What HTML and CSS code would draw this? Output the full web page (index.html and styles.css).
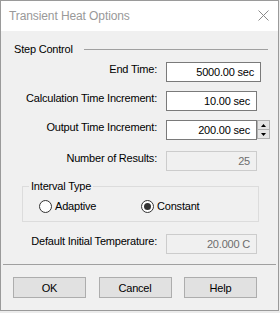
FILE: index.html
```html
<!DOCTYPE html>
<html>
<head>
<meta charset="utf-8">
<link rel="stylesheet" href="styles.css">
</head>
<body>
<div class="window">
  <div class="titlebar">
    <span class="title">Transient Heat Options</span>
    <svg class="close" width="11" height="11" viewBox="0 0 11 11"><path d="M0.5 0.5L10.5 10.5M10.5 0.5L0.5 10.5" stroke="#8a8a8a" stroke-width="1" fill="none"/></svg>
  </div>
  <div class="content">
    <div class="section-head"><span>Step Control</span><span class="rule"></span></div>
    <div class="row first">
      <span class="lbl">End Time:</span>
      <div class="field wide">5000.00 sec</div>
    </div>
    <div class="row">
      <span class="lbl">Calculation Time Increment:</span>
      <div class="field">10.00 sec</div>
    </div>
    <div class="row">
      <span class="lbl">Output Time Increment:</span>
      <div class="field">200.00 sec</div>
      <div class="spin">
        <span class="spin-btn"><svg width="5" height="3" viewBox="0 0 5 3"><path d="M2.5 0L5 3H0z" fill="#000"/></svg></span>
        <span class="spin-btn"><svg width="5" height="3" viewBox="0 0 5 3"><path d="M0 0H5L2.5 3z" fill="#000"/></svg></span>
      </div>
    </div>
    <div class="row results">
      <span class="lbl">Number of Results:</span>
      <div class="field disabled">25</div>
    </div>
    <fieldset class="group">
      <legend>Interval Type</legend>
      <div class="radios">
        <span class="radio adaptive"><span class="circle"></span>Adaptive</span>
        <span class="radio"><span class="circle checked"></span>Constant</span>
      </div>
    </fieldset>
    <div class="row temp">
      <span class="lbl">Default Initial Temperature:</span>
      <div class="field disabled">20.000 C</div>
    </div>
    <div class="sep"></div>
    <div class="buttons">
      <span class="btn">OK</span>
      <span class="btn">Cancel</span>
      <span class="btn">Help</span>
    </div>
  </div>
</div>
</body>
</html>
```

FILE: styles.css
```css
html, body {
  margin: 0;
  padding: 0;
  background: #ececec;
}
body {
  font-family: "Liberation Sans", Arial, sans-serif;
  font-size: 11px;
  letter-spacing: -0.2px;
  color: #000;
}
.window {
  width: 277px;
  height: 309px;
  border: 1px solid #9a9a9a;
  background: #f0f0f0;
  display: flex;
  flex-direction: column;
}
.titlebar {
  height: 30px;
  background: #fff;
  display: flex;
  align-items: center;
  padding-left: 8px;
  padding-right: 9px;
  flex: none;
}
.title {
  flex: 1;
  color: #999;
  font-size: 12px;
  letter-spacing: -0.1px;
  line-height: 16px;
  margin-top: -1px;
}
.close {
  display: block;
  margin-top: -1px;
}
.content {
  padding-top: 10px;
  display: flex;
  flex-direction: column;
}
.section-head {
  display: flex;
  align-items: center;
  height: 16px;
  line-height: 16px;
  padding-left: 13px;
  padding-right: 10px;
}
.rule {
  flex: 1;
  height: 1px;
  background: #a0a0a0;
  margin-left: 11px;
}
.row {
  display: flex;
  align-items: flex-start;
  height: 20px;
  margin-top: 9px;
}
.row.first { margin-top: 5px; }
.row.results { margin-top: 11px; }
.row.temp { margin-top: 12px; }
.lbl {
  width: 156px;
  flex: none;
  text-align: right;
  line-height: 16px;
  margin-top: -1px;
  white-space: nowrap;
}
.field {
  box-sizing: border-box;
  width: 91px;
  height: 20px;
  margin-left: 9px;
  border: 1px solid #7a7a7a;
  background: #fff;
  text-align: right;
  padding-right: 6px;
  line-height: 18px;
  white-space: nowrap;
}
.field.wide { width: 95px; }
.field.disabled {
  border-color: #cccccc;
  background: #f0f0f0;
  color: #6d6d6d;
}
.spin {
  display: flex;
  flex-direction: column;
  width: 13px;
  height: 19px;
}
.spin-btn {
  box-sizing: border-box;
  flex: 1;
  display: flex;
  align-items: center;
  justify-content: center;
  background: #e5e5e5;
  border: 1px solid #b0b0b0;
}
.spin-btn + .spin-btn { border-top: none; }
.spin-btn svg { display: block; }
.group {
  margin: 7px 0 0 21px;
  width: 237px;
  box-sizing: border-box;
  border: 1px solid #dcdcdc;
  padding: 4px 0 7px 16px;
}
.group legend {
  padding: 0 2px;
  margin-left: -10px;
  line-height: 16px;
}
.radios {
  display: flex;
  align-items: center;
  height: 16px;
}
.radio {
  display: flex;
  align-items: center;
  line-height: 16px;
}
.radio.adaptive { width: 102px; }
.circle {
  box-sizing: border-box;
  width: 13px;
  height: 13px;
  border: 1px solid #333;
  border-radius: 50%;
  background: #fff;
  margin-right: 3px;
  display: flex;
  align-items: center;
  justify-content: center;
}
.circle.checked::after {
  content: "";
  width: 7px;
  height: 7px;
  border-radius: 50%;
  background: #333;
}
.sep {
  height: 1px;
  background: #a0a0a0;
  margin: 10px 2px 0 2px;
}
.buttons {
  display: flex;
  gap: 12.5px;
  padding-left: 12px;
  margin-top: 12px;
}
.btn {
  box-sizing: border-box;
  width: 73px;
  height: 21px;
  background: #e1e1e1;
  border: 1px solid #adadad;
  display: flex;
  align-items: center;
  justify-content: center;
  line-height: 16px;
}
```
